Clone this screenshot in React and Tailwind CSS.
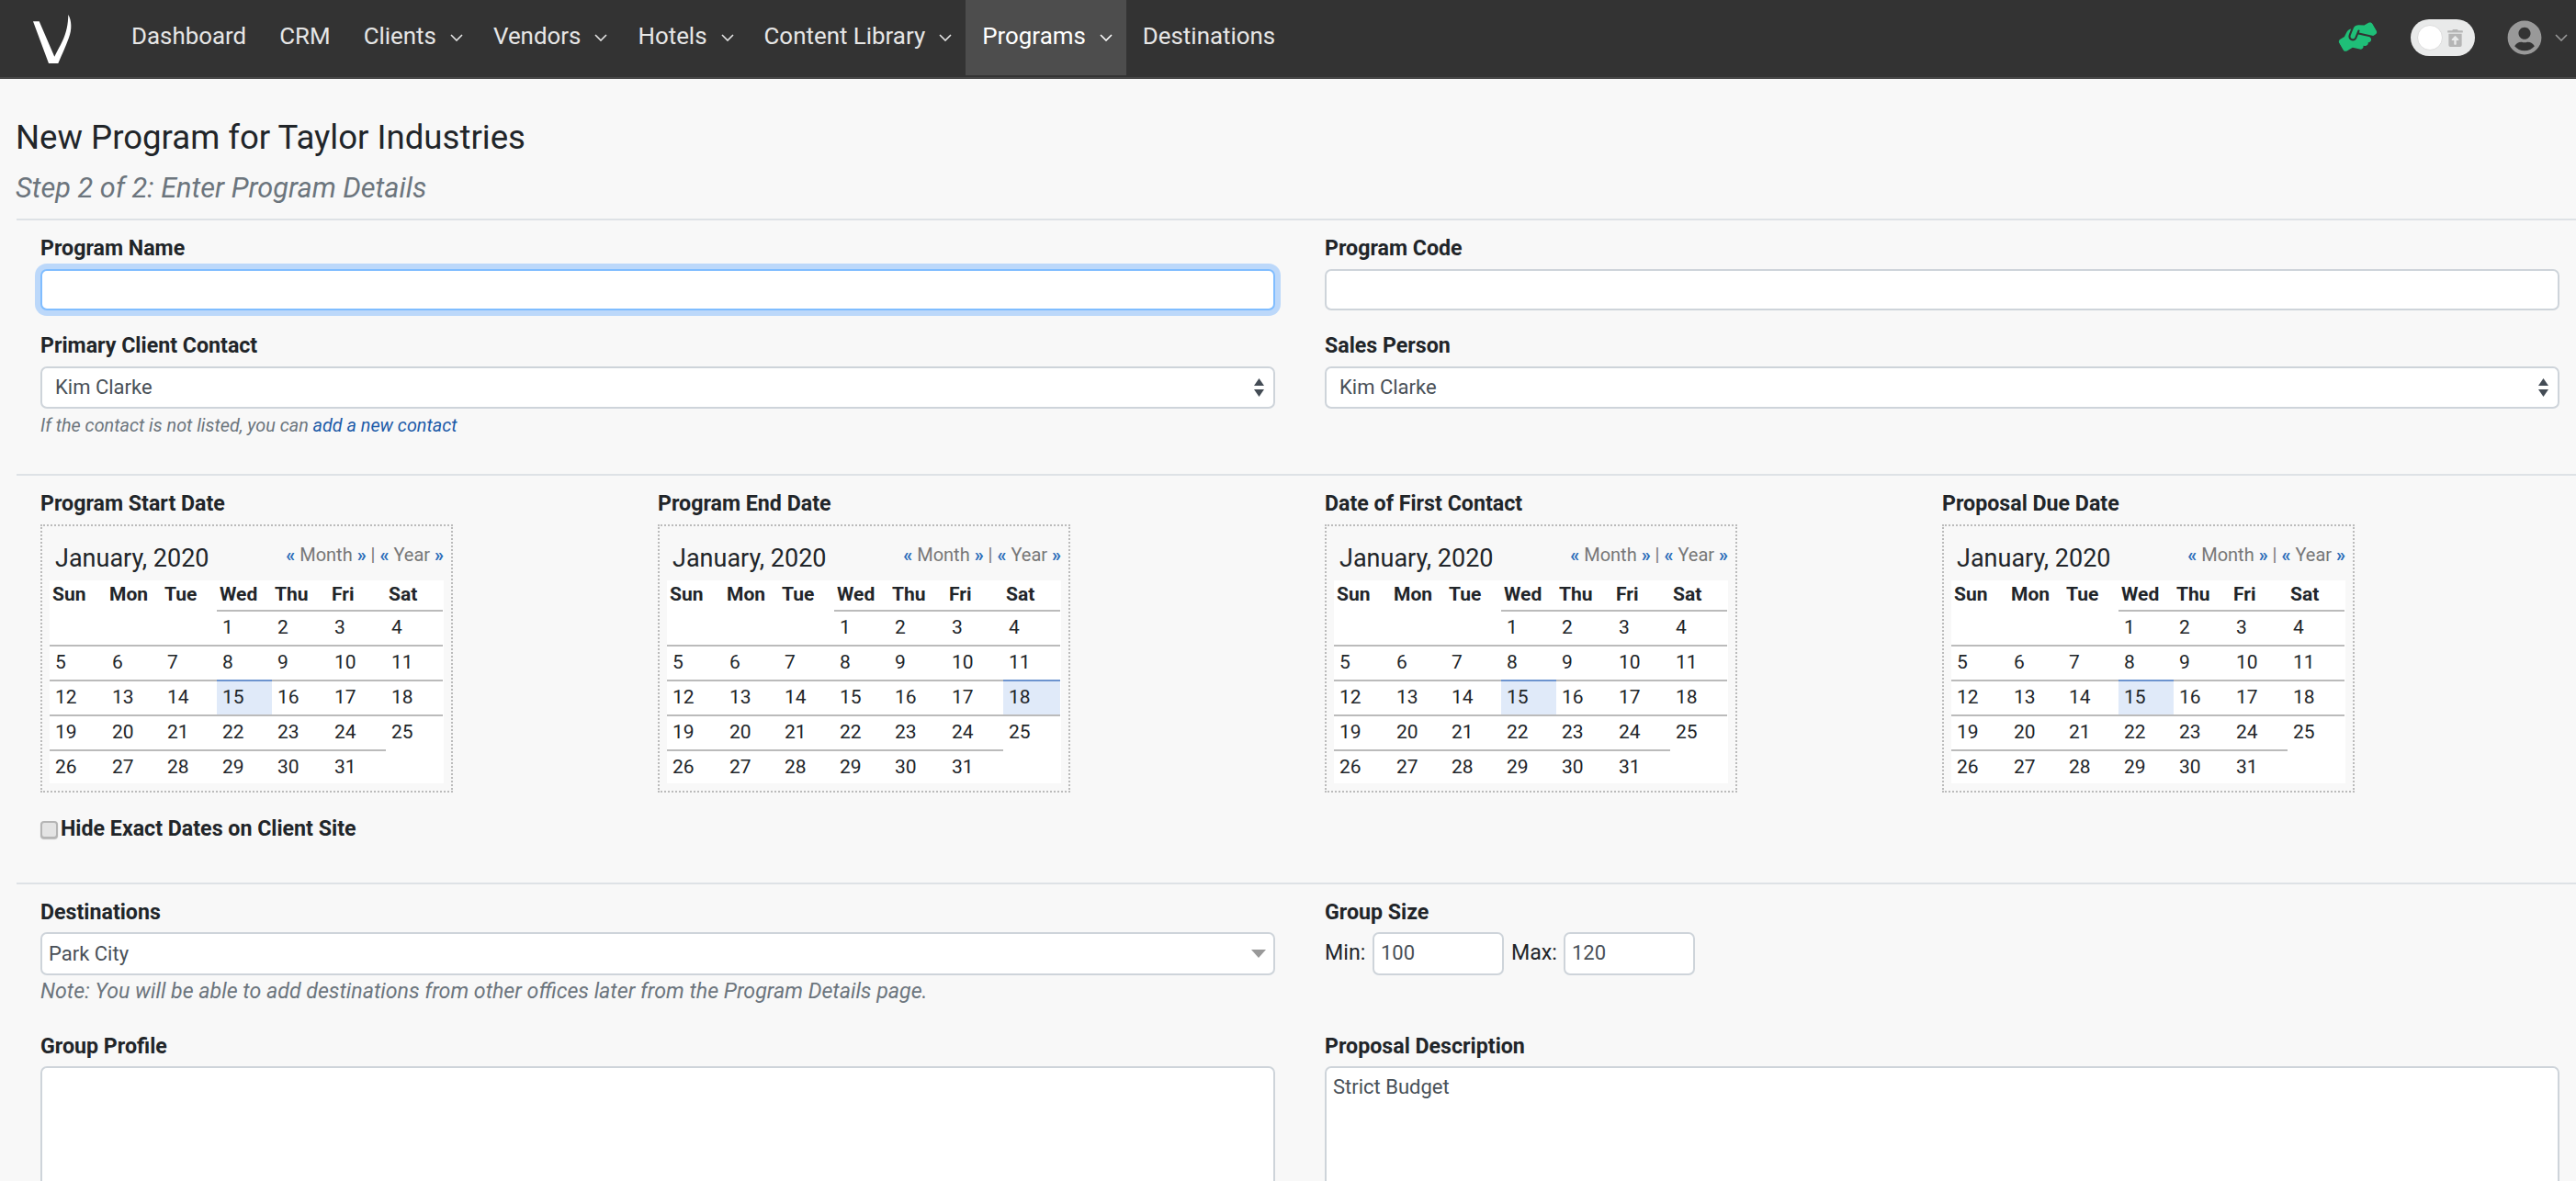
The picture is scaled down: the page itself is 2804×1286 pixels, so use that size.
import { FaTrashRestoreAlt, FaUserCircle } from "react-icons/fa";
import { FaHandshakeSimple } from "react-icons/fa6";

const navItems = [
  { name: "Dashboard" },
  { name: "CRM" },
  { name: "Clients", menu: true },
  { name: "Vendors", menu: true },
  { name: "Hotels", menu: true },
  { name: "Content Library", menu: true },
  { name: "Programs", menu: true, active: true },
  { name: "Destinations" },
];

const days = ["Sun", "Mon", "Tue", "Wed", "Thu", "Fri", "Sat"];

const weeks = [
  [null, null, null, 1, 2, 3, 4],
  [5, 6, 7, 8, 9, 10, 11],
  [12, 13, 14, 15, 16, 17, 18],
  [19, 20, 21, 22, 23, 24, 25],
  [26, 27, 28, 29, 30, 31, null],
];

function Chevron({ className }) {
  return (
    <svg viewBox="0 0 14 8" className={className} fill="none" stroke="currentColor" strokeWidth="1.6">
      <path d="M1 1l6 6 6-6" />
    </svg>
  );
}

function Label({ children }) {
  return <div className="h-[32px] mb-[7px] text-[23.2px] leading-[32px] font-bold text-[#212529]">{children}</div>;
}

function Select({ value }) {
  return (
    <div className="h-[46px] flex items-center justify-between pl-[14px] pr-[10px] bg-white border-2 border-[#ced4da] rounded-[7px] text-[22px] text-[#495057]">
      <span className="-mt-[2px]">{value}</span>
      <svg viewBox="0 0 11 20" className="w-[11px] h-[20px] fill-[#444c55]">
        <path d="M5.5 0L11 8H0zM0 12h11l-5.500 8z" />
      </svg>
    </div>
  );
}

function Calendar({ title, selected }) {
  return (
    <div>
      <Label>{title}</Label>
      <div className="w-[449px] h-[292px] p-[8px] border-2 border-dotted border-[#bbbbbb]">
        <div className="h-[51px] flex justify-between pl-[6px]">
          <span className="text-[27px] leading-[34px] mt-[10px] text-[#212529]">January, 2020</span>
          <span className="text-[20px] leading-[30px] mt-[8px] text-[#777777]">
            <b className="font-bold text-[#2a6cb8]">«</b> Month <b className="font-bold text-[#2a6cb8]">»</b> | <b className="font-bold text-[#2a6cb8]">«</b> Year <b className="font-bold text-[#2a6cb8]">»</b>
          </span>
        </div>
        <div className="bg-white h-[221px] grid grid-cols-[62px_60px_60px_60px_62px_62px_62px] auto-rows-[38px] text-[21px] text-[#212529]">
          {days.map((d) => (
            <div key={d} className="h-[32px] pl-[3px] font-bold leading-[30px]">{d}</div>
          ))}
          {weeks.flat().map((n, i) => (
            <div
              key={i}
              className={
                "-mt-[6px] h-[38px] pl-[6px] leading-[35px] border-t-2 " +
                (n === null
                  ? "border-transparent"
                  : n === selected
                  ? "border-[#6d94cf] bg-[#e0eaf9]"
                  : "border-[#bbbbbb]")
              }
            >
              {n}
            </div>
          ))}
        </div>
      </div>
    </div>
  );
}

export default function App() {
  return (
    <div className="h-[1286px] overflow-hidden bg-[#f8f8f8] [font-family:Roboto,sans-serif] text-[#212529]">
      <nav className="h-[86px] bg-[#333333] border-b-2 border-[#4a4a4a] flex text-[25.9px]">
        <div className="w-[125px] pl-[30px] pt-[10px]">
          <svg viewBox="30 10 52 64" className="w-[52px] h-[64px] fill-white">
            <path d="M36 23.300L42.700 23.300L59.300 61.700C66 48 74 38 74.300 16C78 22 78.500 32 75 41C71.500 51 67 60 63.300 69L53 69Z" />
          </svg>
        </div>
        {navItems.map((item) => (
          <div
            key={item.name}
            className={
              "h-[82px] flex items-center pb-[4px] pl-[18px] " +
              (item.menu ? "pr-[15px] " : "pr-[18px] ") +
              (item.active ? "bg-[#4d4d4d] text-white" : "text-[#e6e6e6]")
            }
          >
            {item.name}
            {item.menu && <Chevron className="w-[14px] h-[8px] ml-[15px] mt-[3px]" />}
          </div>
        ))}
        <div className="ml-auto h-[82px] flex items-center pr-[9px]">
          <FaHandshakeSimple className="w-[42px] h-[42px] -rotate-[30deg] text-[#1fbf78] mr-[36px]" />
          <div className="w-[70px] h-[40px] rounded-full bg-[#e9eaea] flex items-center pl-[7px] mr-[35px]">
            <div className="w-[28px] h-[28px] rounded-full bg-white border border-[#dddddd]"></div>
            <FaTrashRestoreAlt className="w-[17px] h-[19px] ml-[5px] text-[#b5b5b5]" />
          </div>
          <FaUserCircle className="w-[38px] h-[38px] text-[#999999]" />
          <Chevron className="w-[14px] h-[8px] ml-[14px] text-[#999999]" />
        </div>
      </nav>

      <div className="pl-[18px]">
        <h1 className="mt-[40px] -ml-[1px] text-[36.6px] leading-[48px] text-[#212529]">New Program for Taylor Industries</h1>
        <h2 className="mt-[11px] -ml-[1px] text-[30.7px] leading-[40px] italic text-[#6c757d]">Step 2 of 2: Enter Program Details</h2>
        <hr className="mt-[13px] border-0 h-[2px] bg-[#dee2e6]" />

        <div className="pl-[26px] pr-[18px] pt-[14px] grid grid-cols-2 gap-x-[54px]">
          <div>
            <Label>Program Name</Label>
            <input className="block w-full h-[45px] bg-white border-2 border-[#80bdff] rounded-[7px] shadow-[0_0_0_6px_#bcd8fa] outline-none" />
          </div>
          <div>
            <Label>Program Code</Label>
            <input className="block w-full h-[45px] bg-white border-2 border-[#ced4da] rounded-[7px] outline-none" />
          </div>
          <div className="mt-[22px]">
            <Label>Primary Client Contact</Label>
            <Select value="Kim Clarke" />
            <div className="mt-[2px] text-[19.8px] leading-[34px] italic text-[#6c757d]">
              If the contact is not listed, you can <span className="text-[#1c5ba8]">add a new contact</span>
            </div>
          </div>
          <div className="mt-[22px]">
            <Label>Sales Person</Label>
            <Select value="Kim Clarke" />
          </div>
        </div>
        <hr className="mt-[35px] border-0 h-[2px] bg-[#dee2e6]" />

        <div className="pl-[26px] pr-[18px] pt-[14px]">
          <div className="grid grid-cols-2 gap-x-[54px]">
            <div className="grid grid-cols-2">
              <Calendar title="Program Start Date" selected={15} />
              <Calendar title="Program End Date" selected={18} />
            </div>
            <div className="grid grid-cols-2">
              <Calendar title="Date of First Contact" selected={15} />
              <Calendar title="Proposal Due Date" selected={15} />
            </div>
          </div>
          <div className="mt-[23px] h-[32px] flex items-center text-[23.2px] font-bold">
            <input type="checkbox" className="appearance-none w-[19px] h-[19px] mt-[3px] mr-[3px] bg-[#e4e4e4] border-2 border-[#b5b5b5] rounded-[4px] shadow-[0_1px_1px_#bbbbbb]" />
            Hide Exact Dates on Client Site
          </div>
        </div>
        <hr className="mt-[43px] border-0 h-[2px] bg-[#dee2e6]" />

        <div className="pl-[26px] pr-[18px] pt-[14px] grid grid-cols-2 gap-x-[54px]">
          <div>
            <Label>Destinations</Label>
            <div className="h-[47px] flex items-center justify-between pl-[7px] pr-[8px] -mt-[1px] bg-white border-2 border-[#ced4da] rounded-[7px] text-[22px] text-[#495057]">
              <span>Park City</span>
              <span className="w-0 h-0 border-x-[8px] border-x-transparent border-t-[9px] border-t-[#999999]"></span>
            </div>
            <div className="text-[23.2px] leading-[34px] italic text-[#6c757d]">
              Note: You will be able to add destinations from other offices later from the Program Details page.
            </div>
          </div>
          <div>
            <Label>Group Size</Label>
            <div className="-mt-[1px] flex items-center text-[22px] text-[#495057]">
              <span className="text-[23.2px] text-[#212529] mr-[8px] w-[44px] -mt-[3px]">Min:</span>
              <input readOnly value="100" className="w-[143px] h-[47px] px-[7px] pb-[3px] bg-white border-2 border-[#ced4da] rounded-[7px] outline-none" />
              <span className="text-[23.2px] text-[#212529] ml-[8px] mr-[8px] w-[49px] -mt-[3px]">Max:</span>
              <input readOnly value="120" className="w-[143px] h-[47px] px-[7px] pb-[3px] bg-white border-2 border-[#ced4da] rounded-[7px] outline-none" />
            </div>
          </div>
          <div className="mt-[27px]">
            <Label>Group Profile</Label>
            <textarea readOnly className="block w-full h-[300px] -mt-[1px] bg-white border-2 border-[#ced4da] rounded-[7px] outline-none"></textarea>
          </div>
          <div className="mt-[27px]">
            <Label>Proposal Description</Label>
            <textarea readOnly value="Strict Budget" className="block w-full h-[300px] -mt-[1px] px-[7px] py-[6px] text-[22px] leading-[30px] text-[#495057] bg-white border-2 border-[#ced4da] rounded-[7px] outline-none"></textarea>
          </div>
        </div>
      </div>
    </div>
  );
}
